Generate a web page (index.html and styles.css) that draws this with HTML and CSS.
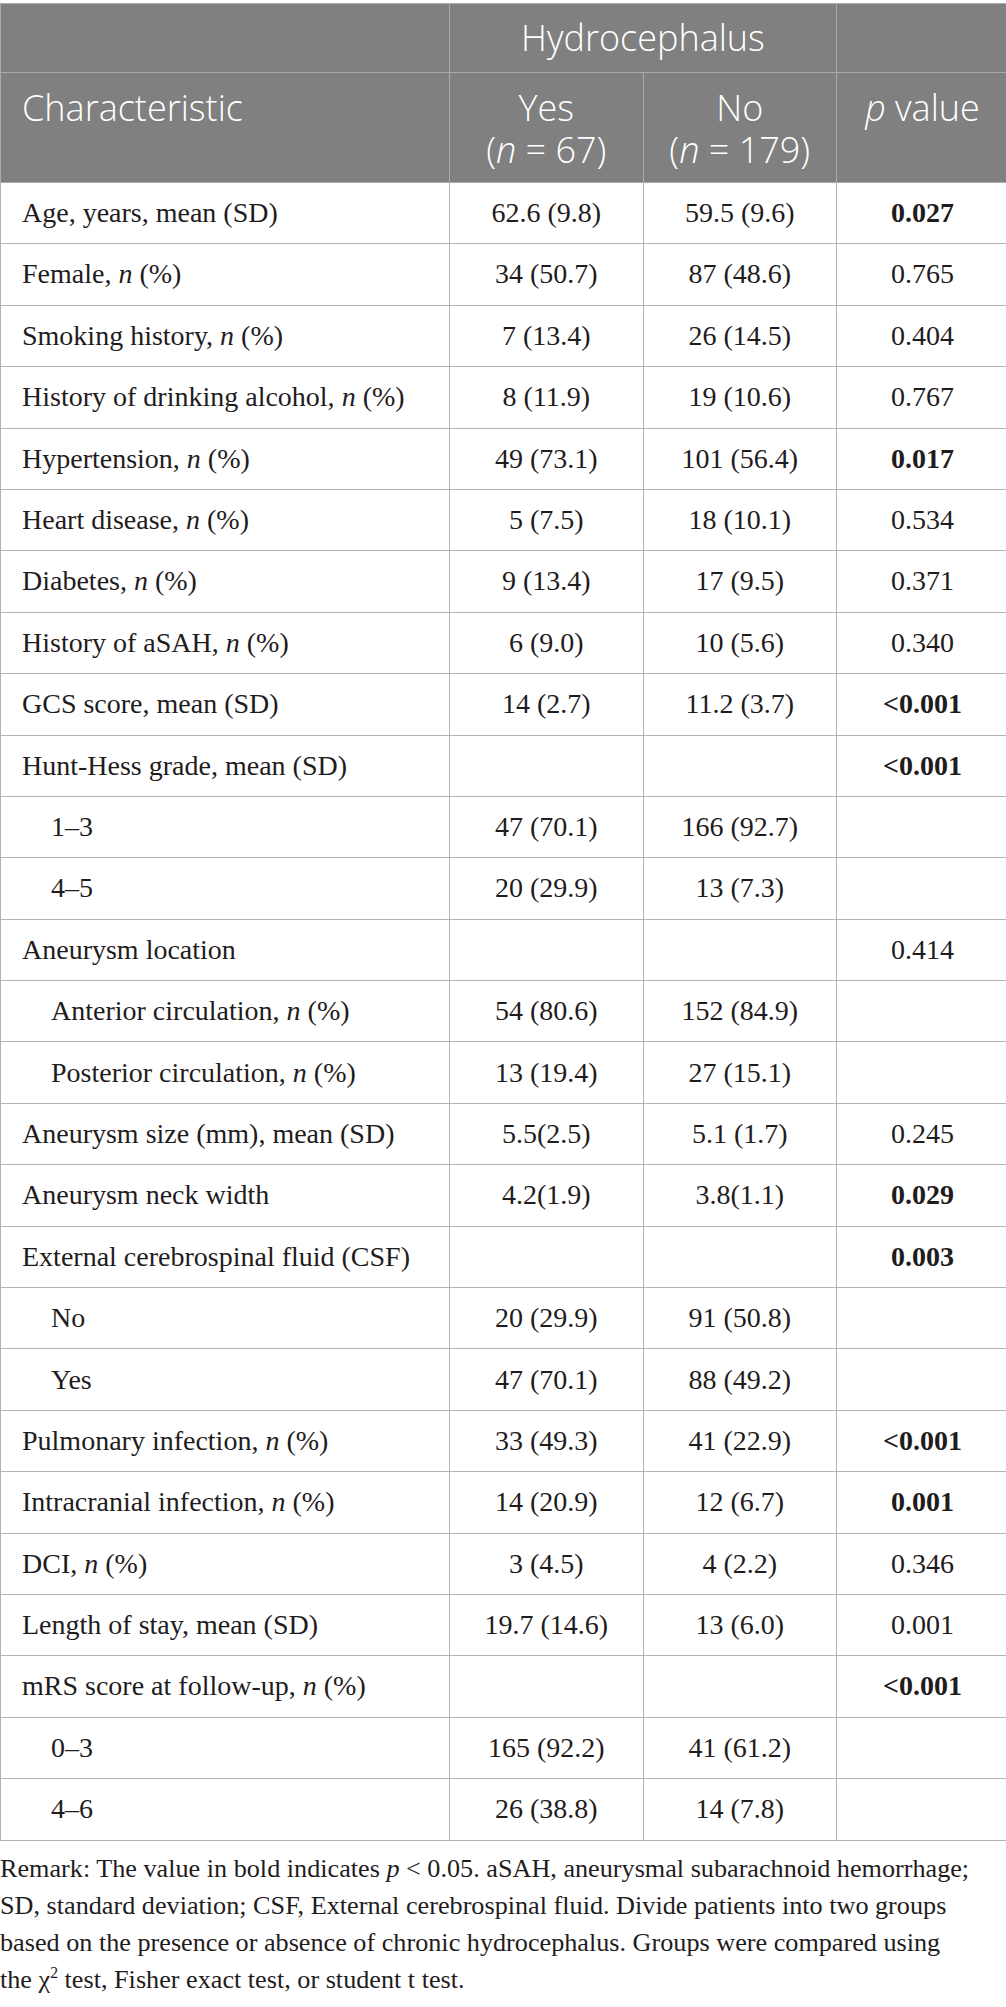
FILE: index.html
```html
<!DOCTYPE html>
<html lang="en">
<head>
<meta charset="utf-8">
<title>Hydrocephalus table</title>
<link rel="stylesheet" href="styles.css">
</head>
<body>
<div class="page">
<table class="data">
  <thead>
    <tr class="hrow1">
      <th class="hc"></th>
      <th class="hc group" colspan="2">Hydrocephalus</th>
      <th class="hc"></th>
    </tr>
    <tr class="hrow2">
      <th class="hc left">Characteristic</th>
      <th class="hc">Yes<br>(<i>n</i> = 67)</th>
      <th class="hc">No<br>(<i>n</i> = 179)</th>
      <th class="hc"><i>p</i> value</th>
    </tr>
  </thead>
  <tbody>
    <tr><td class="lab">Age, years, mean (SD)</td><td>62.6 (9.8)</td><td>59.5 (9.6)</td><td class="b">0.027</td></tr>
    <tr><td class="lab">Female, <i>n</i> (%)</td><td>34 (50.7)</td><td>87 (48.6)</td><td>0.765</td></tr>
    <tr><td class="lab">Smoking history, <i>n</i> (%)</td><td>7 (13.4)</td><td>26 (14.5)</td><td>0.404</td></tr>
    <tr><td class="lab">History of drinking alcohol, <i>n</i> (%)</td><td>8 (11.9)</td><td>19 (10.6)</td><td>0.767</td></tr>
    <tr><td class="lab">Hypertension, <i>n</i> (%)</td><td>49 (73.1)</td><td>101 (56.4)</td><td class="b">0.017</td></tr>
    <tr><td class="lab">Heart disease, <i>n</i> (%)</td><td>5 (7.5)</td><td>18 (10.1)</td><td>0.534</td></tr>
    <tr><td class="lab">Diabetes, <i>n</i> (%)</td><td>9 (13.4)</td><td>17 (9.5)</td><td>0.371</td></tr>
    <tr><td class="lab">History of aSAH, <i>n</i> (%)</td><td>6 (9.0)</td><td>10 (5.6)</td><td>0.340</td></tr>
    <tr><td class="lab">GCS score, mean (SD)</td><td>14 (2.7)</td><td>11.2 (3.7)</td><td class="b">&lt;0.001</td></tr>
    <tr><td class="lab">Hunt-Hess grade, mean (SD)</td><td></td><td></td><td class="b">&lt;0.001</td></tr>
    <tr><td class="lab sub">1–3</td><td>47 (70.1)</td><td>166 (92.7)</td><td></td></tr>
    <tr><td class="lab sub">4–5</td><td>20 (29.9)</td><td>13 (7.3)</td><td></td></tr>
    <tr><td class="lab">Aneurysm location</td><td></td><td></td><td>0.414</td></tr>
    <tr><td class="lab sub">Anterior circulation, <i>n</i> (%)</td><td>54 (80.6)</td><td>152 (84.9)</td><td></td></tr>
    <tr><td class="lab sub">Posterior circulation, <i>n</i> (%)</td><td>13 (19.4)</td><td>27 (15.1)</td><td></td></tr>
    <tr><td class="lab">Aneurysm size (mm), mean (SD)</td><td>5.5(2.5)</td><td>5.1 (1.7)</td><td>0.245</td></tr>
    <tr><td class="lab">Aneurysm neck width</td><td>4.2(1.9)</td><td>3.8(1.1)</td><td class="b">0.029</td></tr>
    <tr><td class="lab">External cerebrospinal fluid (CSF)</td><td></td><td></td><td class="b">0.003</td></tr>
    <tr><td class="lab sub">No</td><td>20 (29.9)</td><td>91 (50.8)</td><td></td></tr>
    <tr><td class="lab sub">Yes</td><td>47 (70.1)</td><td>88 (49.2)</td><td></td></tr>
    <tr><td class="lab">Pulmonary infection, <i>n</i> (%)</td><td>33 (49.3)</td><td>41 (22.9)</td><td class="b">&lt;0.001</td></tr>
    <tr><td class="lab">Intracranial infection, <i>n</i> (%)</td><td>14 (20.9)</td><td>12 (6.7)</td><td class="b">0.001</td></tr>
    <tr><td class="lab">DCI, <i>n</i> (%)</td><td>3 (4.5)</td><td>4 (2.2)</td><td>0.346</td></tr>
    <tr><td class="lab">Length of stay, mean (SD)</td><td>19.7 (14.6)</td><td>13 (6.0)</td><td>0.001</td></tr>
    <tr><td class="lab">mRS score at follow-up, <i>n</i> (%)</td><td></td><td></td><td class="b">&lt;0.001</td></tr>
    <tr><td class="lab sub">0–3</td><td>165 (92.2)</td><td>41 (61.2)</td><td></td></tr>
    <tr><td class="lab sub">4–6</td><td>26 (38.8)</td><td>14 (7.8)</td><td></td></tr>
  </tbody>
</table>
<p class="note">Remark: The value in bold indicates <i>p</i> &lt; 0.05. aSAH, aneurysmal subarachnoid hemorrhage;<br>SD, standard deviation; CSF, External cerebrospinal fluid. Divide patients into two groups<br>based on the presence or absence of chronic hydrocephalus. Groups were compared using<br>the χ<sup>2</sup> test, Fisher exact test, or student t test.</p>
</div>
</body>
</html>
```
FILE: styles.css
```css
html, body {
  margin: 0;
  padding: 0;
  background: #ffffff;
}

.page {
  width: 1006px;
  padding-top: 3px;
}

.data {
  width: 1005px;
  border-collapse: collapse;
  table-layout: fixed;
  font-family: "Liberation Serif", "Times New Roman", serif;
  font-size: 28px;
  color: #1f1c1d;
}

.hc {
  background: #808080;
  color: #ffffff;
  font-family: "Open Sans", "Liberation Sans", sans-serif;
  font-weight: 300;
  font-size: 36px;
  line-height: 42px;
  text-align: center;
  border: 1px solid #aaaaaa;
  padding: 0;
}

.hrow1 .hc {
  height: 68px;
  vertical-align: middle;
}

.hrow1 .hc:nth-child(1) { width: 448px; }
.hrow1 .hc:nth-child(2) { width: 386px; }
.hrow1 .hc:nth-child(3) { width: 171px; }

.hrow2 .hc {
  height: 110px;
  vertical-align: top;
  padding-top: 14px;
  box-sizing: border-box;
}

.hrow2 .hc.left {
  text-align: left;
  padding-left: 21px;
}

.hc i {
  font-style: italic;
}

.data tbody tr {
  height: 61.4px;
}

.data td {
  border: 1px solid #b4b4b4;
  text-align: center;
  vertical-align: middle;
  padding: 0;
  line-height: 1.15;
}

.data td.lab {
  text-align: left;
  padding-left: 21px;
}

.data td.lab.sub {
  padding-left: 50px;
}

.data td.b {
  font-weight: bold;
}

.note {
  margin: 9px 0 0 0;
  width: 1006px;
  font-family: "Liberation Serif", "Times New Roman", serif;
  font-size: 26.2px;
  line-height: 37.3px;
  color: #1f1c1d;
}

.note sup {
  font-size: 60%;
  line-height: 0;
  vertical-align: super;
}
```
